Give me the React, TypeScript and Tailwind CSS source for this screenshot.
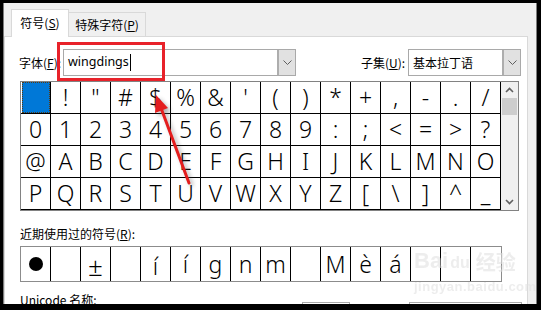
import React from 'react';

const rows: string[][] = [
  ['', '!', '"', '#', '$', '%', '&', "'", '(', ')', '*', '+', ',', '-', '.', '/'],
  '0123456789:;<=>?'.split(''),
  '@ABCDEFGHIJKLMNO'.split(''),
  'PQRSTUVWXYZ[\\]^_'.split(''),
];

const recent = ['●', '', '±', '', 'í', 'í', 'g', 'n', 'm', '', 'M', 'è', 'á', '', '', ''];

function Chevron() {
  return (
    <svg width="9" height="6" viewBox="0 0 9 6">
      <path d="M0.5 0.5 L4.5 4.5 L8.5 0.5" fill="none" stroke="#5f5f5f" strokeWidth="1" />
    </svg>
  );
}

function Combo({ width, text, children }: { width: string; text?: string; children?: React.ReactNode }) {
  return (
    <div className={`${width} h-[27px] flex border border-[#a9a9a9] bg-white`}>
      <div className="flex-1 flex items-center pl-[4px] text-[12px]">
        {text}
        {children}
      </div>
      <div className="w-[18px] h-full flex items-center justify-center bg-[#e1e1e1] border-l-2 border-[#adadad]">
        <Chevron />
      </div>
    </div>
  );
}

export default function App() {
  return (
    <div className="relative w-[541px] h-[310px] bg-black pt-[3px] pl-[3px] pr-[4px] pb-[6px] font-['Noto_Sans_CJK_SC',sans-serif] text-[12px] text-black">
      <div className="h-full overflow-hidden bg-[#f0f0f0] border-l border-r border-[#7d7d7d] flex flex-col">
        {/* tabs */}
        <div className="relative z-10 flex items-end h-[28px] mt-[6px] ml-[7px]">
          <div className="w-[58px] h-[28px] bg-white border border-b-0 border-[#d9d9d9] flex items-center justify-center pb-[2px]">
            符号(<span className="underline">S</span>)
          </div>
          <div className="w-[77px] h-[24px] mb-px bg-[#f0f0f0] border border-l-0 border-b-0 border-[#d9d9d9] flex items-center justify-center">
            特殊字符(<span className="underline">P</span>)
          </div>
        </div>

        {/* panel */}
        <div className="-mt-px w-[524px] flex-1 bg-white border border-[#d9d9d9] pl-[15px] flex flex-col">
          {/* font row */}
          <div className="mt-[12px] h-[27px] flex items-center">
            <div className="-ml-px w-[44px]">
              字体(<span className="underline">F</span>):
            </div>
            <Combo width="w-[233px]">
              <span className="font-['Noto_Sans',sans-serif] text-[12.5px]">wingdings</span>
              <span className="ml-px w-px h-[17px] bg-black" />
            </Combo>
            <div className="ml-[65px] w-[47px]">
              子集(<span className="underline">U</span>):
            </div>
            <Combo width="w-[113px]" text="基本拉丁语" />
          </div>

          {/* symbol grid */}
          <div className="mt-[5px] flex w-[499px] border border-[#828282]">
            <div className="flex flex-col">
              {rows.map((row, r) => (
                <div key={r} className="flex">
                  {row.map((ch, c) => (
                    <div
                      key={c}
                      className="w-[30px] h-[32px] border-r border-b border-black flex items-center justify-center font-['Noto_Sans',sans-serif] font-light text-[23px] leading-none"
                    >
                      {r === 0 && c === 0 ? (
                        <div className="w-[28px] h-[31px] -mt-px border border-dotted border-[#5a3a10] bg-[#0078d7]" />
                      ) : (
                        ch
                      )}
                    </div>
                  ))}
                </div>
              ))}
            </div>
            {/* scrollbar */}
            <div className="w-[17px] bg-[#f0f0f0] flex flex-col items-center">
              <div className="h-[16px] flex items-center justify-center">
                <svg width="9" height="6" viewBox="0 0 9 6">
                  <path d="M1 5 L4.5 1.5 L8 5" fill="none" stroke="#606060" strokeWidth="1.6" />
                </svg>
              </div>
              <div className="w-[15px] h-[17px] bg-[#cdcdcd]" />
              <div className="flex-1" />
              <div className="h-[16px] flex items-center justify-center">
                <svg width="9" height="6" viewBox="0 0 9 6">
                  <path d="M1 1 L4.5 4.5 L8 1" fill="none" stroke="#606060" strokeWidth="1.6" />
                </svg>
              </div>
            </div>
          </div>

          {/* recently used */}
          <div className="mt-[15px] h-[16px] leading-[16px]">
            近期使用过的符号(<span className="underline">R</span>):
          </div>
          <div className="mt-[4px] h-[36px] w-[482px] flex border border-[#8c8c8c]">
            {recent.map((ch, i) => (
              <div
                key={i}
                className={`w-[30px] h-full flex items-center justify-center font-['Noto_Sans',sans-serif] font-light text-[23px] leading-none ${
                  i < recent.length - 1 ? 'border-r border-black' : ''
                }`}
              >
                {ch === '●' ? (
                  <span className="w-[14px] h-[14px] rounded-full bg-black" />
                ) : ch === '±' ? (
                  <span className="text-[26px] mt-[4px]">±</span>
                ) : i === 4 ? (
                  <span className="mt-[4px]">{ch}</span>
                ) : (
                  ch
                )}
              </div>
            ))}
          </div>

          {/* unicode row */}
          <div className="mt-[10px] flex">
            <div className="h-[16px] leading-[16px]">Unicode 名称:</div>
            <div className="ml-[205px] mt-[10px] w-[48px] h-[24px] border border-[#a9a9a9] bg-white" />
            <div className="ml-[59px] mt-[10px] w-[113px] h-[24px] border border-[#a9a9a9] bg-white" />
          </div>
        </div>
      </div>

      {/* red highlight box */}
      <div className="absolute left-[57px] top-[42px] w-[108px] h-[39px] border-[3px] border-[#e8222a]" />

      {/* red arrow */}
      <svg className="absolute left-0 top-0 pointer-events-none" width="541" height="310">
        <defs>
          <filter id="sh" x="-20%" y="-20%" width="140%" height="140%">
            <feGaussianBlur stdDeviation="2" />
          </filter>
        </defs>
        <g transform="translate(3,3)" opacity="0.45" filter="url(#sh)">
          <line x1="189" y1="183" x2="161" y2="108" stroke="#555" strokeWidth="3" />
          <polygon points="156,95 168,108 155,113" fill="#555" />
        </g>
        <line x1="189" y1="183" x2="161" y2="108" stroke="#e41e1e" strokeWidth="3" strokeLinecap="round" />
        <polygon points="156,95 168,108 155,113" fill="#e41e1e" />
      </svg>

      {/* watermark */}
      <div className="absolute left-[414px] top-[250px] pointer-events-none text-[#e2e2e2] opacity-60">
        <div className="flex items-end font-['Liberation_Sans',sans-serif] font-bold text-[22px] leading-none">
          <span>Bai</span>
          <span className="text-[16px] ml-[2px] mb-[1px]">du</span>
          <span className="ml-[6px] font-['Noto_Sans_CJK_SC',sans-serif] text-[20px]">经验</span>
        </div>
        <div className="mt-[8px] font-['Liberation_Sans',sans-serif] font-bold text-[13px] leading-none tracking-[0.5px]">
          jingyan.baidu.com
        </div>
      </div>
    </div>
  );
}
